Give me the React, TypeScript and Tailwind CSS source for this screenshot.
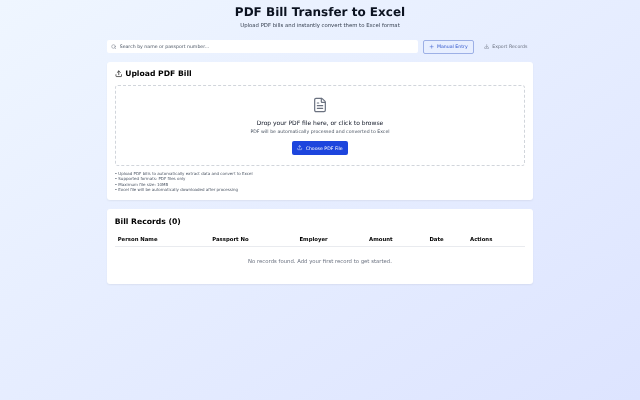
import { FileText, Plus, Search, Upload, Download } from "lucide-react";

const headers: [string, string][] = [
  ["Person Name", "w-[94.6px]"],
  ["Passport No", "w-[87.2px]"],
  ["Employer", "w-[69.6px]"],
  ["Amount", "w-[60.4px]"],
  ["Date", "w-[40.6px]"],
  ["Actions", "flex-1"],
];

export default function App() {
  return (
    <div className="min-h-[400px] bg-gradient-to-br from-[#eff6ff] to-[#dde4ff] font-['DejaVu_Sans',sans-serif] pt-[4px] antialiased [text-rendering:geometricPrecision] blur-[0.3px]">
      <div className="w-[426.67px] mx-auto">
        <header className="text-center">
          <h1 className="text-[12px] leading-[16px] font-bold text-[#0b1220]">PDF Bill Transfer to Excel</h1>
          <p className="text-[5.33px] leading-[8px] mt-[2px] text-[#374151]">Upload PDF bills and instantly convert them to Excel format</p>
        </header>
        <div className="flex items-center mt-[10px] h-[13px]">
          <div className="relative w-[311px] h-[13px] bg-white rounded-[2px] flex items-center pl-[13px] pt-[1px] text-[4.67px] text-[#4b5563]">
            <Search className="absolute left-[4px] top-[4px] w-[5.5px] h-[5.5px] text-[#6b7280]" strokeWidth={2} />
            Search by name or passport number...
          </div>
          <button className="ml-[5px] w-[51px] h-[14px] flex items-center justify-center gap-[3px] rounded-[2px] border border-[#9db0e6] text-[4.67px] text-[#2f55cc]">
            <Plus className="w-[5.33px] h-[5.33px]" strokeWidth={2} />
            Manual Entry
          </button>
          <button className="ml-[5px] w-[54px] h-[14px] flex items-center justify-center gap-[3px] text-[4.67px] text-[#6b7280]">
            <Download className="w-[5.33px] h-[5.33px]" strokeWidth={2} />
            Export Records
          </button>
        </div>
        <section className="mt-[9px] h-[138px] bg-white rounded-[3px] shadow-[0_1px_2px_rgba(0,0,0,0.06)] px-[8px] pt-[6px]">
          <h2 className="flex items-center gap-[3px] text-[7.67px] leading-[12px] font-bold text-black">
            <Upload className="w-[7.5px] h-[7.5px]" strokeWidth={2} />
            Upload PDF Bill
          </h2>
          <div className="mt-[5px] h-[81px] border border-dashed border-[#d1d5db] rounded-[3px] flex flex-col items-center pt-[11px]">
            <FileText className="w-[16px] h-[16px] text-[#6b7280]" strokeWidth={1.8} />
            <p className="mt-[6px] text-[6px] leading-[10px] text-[#111827]">Drop your PDF file here, or click to browse</p>
            <p className="mt-[0px] text-[4.67px] leading-[8px] text-[#4b5563]">PDF will be automatically processed and converted to Excel</p>
            <button className="mt-[4px] w-[56px] h-[14px] bg-[#1d45dd] rounded-[2px] text-white text-[4.67px] flex items-center justify-center gap-[3px]">
              <Upload className="w-[5.33px] h-[5.33px]" strokeWidth={2} />
              Choose PDF File
            </button>
          </div>
          <ul className="mt-[5px] text-[4px] leading-[5.33px] text-[#4b5563]">
            <li>• Upload PDF bills to automatically extract data and convert to Excel</li>
            <li>• Supported formats: PDF files only</li>
            <li>• Maximum file size: 10MB</li>
            <li>• Excel file will be automatically downloaded after processing</li>
          </ul>
        </section>
        <section className="mt-[9px] h-[75px] bg-white rounded-[3px] shadow-[0_1px_2px_rgba(0,0,0,0.06)] px-[8px] pt-[7px]">
          <h2 className="text-[7.67px] leading-[12px] font-bold text-black">Bill Records (0)</h2>
          <div className="mt-[5px] flex items-center h-[14px] pt-[2px] border-b border-[#e9ebef] px-[3px] text-[5.33px] font-bold text-black">
            {headers.map(([h, w]) => (
              <div key={h} className={w}>{h}</div>
            ))}
          </div>
          <p className="mt-[11px] text-center text-[5.33px] leading-[8px] text-[#6b7280]">No records found. Add your first record to get started.</p>
        </section>
      </div>
    </div>
  );
}
